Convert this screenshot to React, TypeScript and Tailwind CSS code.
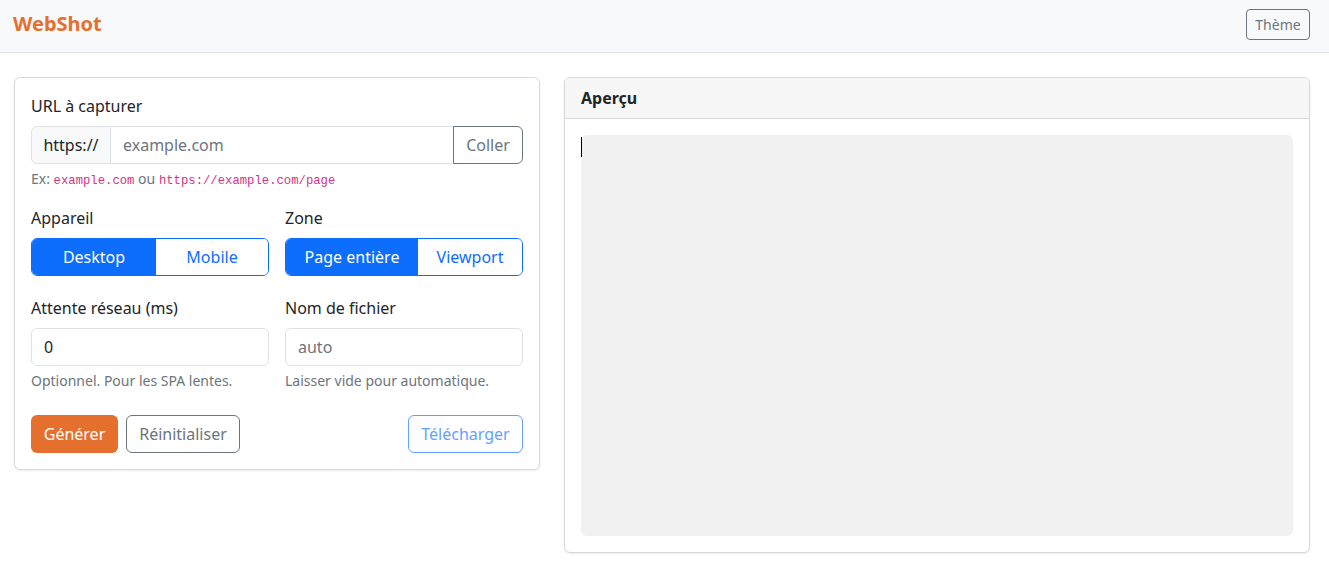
const font = { fontFamily: '"Noto Sans", "Open Sans", sans-serif' };
const mono = { fontFamily: '"Liberation Mono", "DejaVu Sans Mono", monospace' };

function Label({ children }: { children: React.ReactNode }) {
  return <div className="mb-2 text-[16px] leading-6 text-[#212529]">{children}</div>;
}

function Segmented({ items, widths }: { items: string[]; widths: string[] }) {
  return (
    <div className="flex h-[38px] overflow-hidden rounded-[6px] border border-[#0d6efd]">
      {items.map((item, i) => (
        <button
          key={item}
          className={`${widths[i]} h-full text-[16px] ${
            i === 0 ? "bg-[#0d6efd] text-white" : "bg-white text-[#0d6efd]"
          }`}
        >
          {item}
        </button>
      ))}
    </div>
  );
}

export default function App() {
  return (
    <div className="min-h-[571px] bg-white text-[#212529]" style={font}>
      <header className="flex h-[53px] items-center justify-between border-b border-[#dee2e6] bg-[#f8f9fa] pb-[4px] pl-[13px] pr-[19px]">
        <div className="text-[20px] font-bold text-[#e5702e]">WebShot</div>
        <button className="h-[31px] w-[64px] rounded-[4px] border border-[#6c757d] text-[14px] text-[#6c757d]">
          Thème
        </button>
      </header>

      <main className="flex items-start gap-6 pl-[14px] pt-6">
        <section className="w-[526px] rounded-[6px] border border-[#d9d9d9] bg-white p-4 shadow-[0_1px_2px_rgba(0,0,0,0.08)]">
          <div>
            <Label>URL à capturer</Label>
            <div className="flex h-[38px]">
              <span className="flex w-[80px] items-center justify-center rounded-l-[6px] border border-[#dee2e6] bg-[#f8f9fa] text-[16px]">
                https://
              </span>
              <input
                placeholder="example.com"
                className="min-w-0 flex-1 border-y border-[#dee2e6] px-3 text-[16px] placeholder:text-[#6c757d] outline-none"
              />
              <button className="w-[70px] rounded-r-[6px] border border-[#6c757d] text-[16px] text-[#6c757d]">
                Coller
              </button>
            </div>
            <div className="mt-1 text-[14px] leading-[21px] text-[#6c757d]">
              Ex:{" "}
              <code className="text-[12.25px] text-[#d63384]" style={mono}>
                example.com
              </code>{" "}
              ou{" "}
              <code className="text-[12.25px] text-[#d63384]" style={mono}>
                https://example.com/page
              </code>
            </div>
          </div>

          <div className="mt-[14px] grid grid-cols-[238px_1fr] gap-x-[16px]">
            <div>
              <Label>Appareil</Label>
              <Segmented items={["Desktop", "Mobile"]} widths={["w-[124px]", "flex-1"]} />
            </div>
            <div>
              <Label>Zone</Label>
              <Segmented items={["Page entière", "Viewport"]} widths={["w-[132px]", "flex-1"]} />
            </div>
          </div>

          <div className="mt-5 grid grid-cols-[238px_1fr] gap-x-[16px]">
            <div>
              <Label>Attente réseau (ms)</Label>
              <input
                defaultValue="0"
                className="h-[38px] w-full rounded-[6px] border border-[#dee2e6] px-3 text-[16px] outline-none"
              />
              <div className="mt-1 text-[14px] leading-[21px] text-[#6c757d]">Optionnel. Pour les SPA lentes.</div>
            </div>
            <div>
              <Label>Nom de fichier</Label>
              <input
                placeholder="auto"
                className="h-[38px] w-full rounded-[6px] border border-[#dee2e6] px-3 text-[16px] placeholder:text-[#6c757d] outline-none"
              />
              <div className="mt-1 text-[14px] leading-[21px] text-[#6c757d]">Laisser vide pour automatique.</div>
            </div>
          </div>

          <div className="mt-6 flex items-center gap-2">
            <button className="h-[38px] w-[87px] rounded-[6px] bg-[#e5702e] text-[16px] text-white">Générer</button>
            <button className="h-[38px] w-[114px] rounded-[6px] border border-[#6c757d] text-[16px] text-[#6c757d]">
              Réinitialiser
            </button>
            <button className="ml-auto h-[38px] w-[115px] rounded-[6px] border border-[#0d6efd] text-[16px] text-[#0d6efd] opacity-65">
              Télécharger
            </button>
          </div>
        </section>

        <section className="w-[746px] overflow-hidden rounded-[6px] border border-[#d9d9d9] bg-white shadow-[0_1px_2px_rgba(0,0,0,0.08)]">
          <div className="flex h-[41px] items-center border-b border-[#d9d9d9] bg-[#f7f7f7] px-4 text-[16px] font-bold">
            Aperçu
          </div>
          <div className="p-4">
            <div className="h-[401px] rounded-[6px] bg-[#f1f1f1] pt-[2px]">
              <div className="h-[20px] w-px bg-black" />
            </div>
          </div>
        </section>
      </main>
    </div>
  );
}
